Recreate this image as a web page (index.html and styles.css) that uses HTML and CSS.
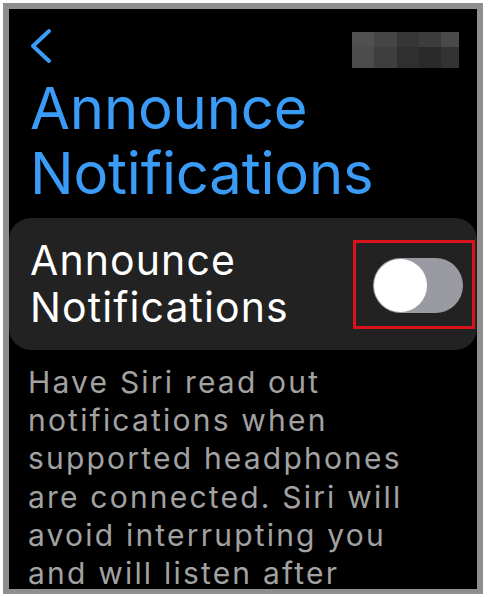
FILE: index.html
```html
<!DOCTYPE html>
<html>
<head>
<meta charset="utf-8">
<link rel="stylesheet" href="styles.css">
</head>
<body>
<div class="frame">
  <div class="header">
    <svg class="back" width="24" height="36" viewBox="0 0 24 36"><polyline points="20,3 4,18 20,33" fill="none" stroke="#3a9cf6" stroke-width="4" stroke-linecap="round" stroke-linejoin="round"/></svg>
    <div class="mask">
      <span class="m1"></span><span class="m2"></span><span class="m3"></span><span class="m4"></span><span class="m5"></span>
      <span class="m6"></span><span class="m7"></span><span class="m8"></span><span class="m9"></span><span class="m10"></span>
    </div>
  </div>
  <h1 class="title">Announce<br>Notifications</h1>
  <div class="card">
    <div class="card-label">Announce<br>Notifications</div>
    <div class="highlight">
      <div class="toggle"><div class="knob"></div></div>
    </div>
  </div>
  <p class="desc">Have Siri read out notifications when supported headphones are connected. Siri will avoid interrupting you and will listen after</p>
</div>
</body>
</html>
```

FILE: styles.css
```css
html, body {
  margin: 0;
  padding: 0;
  background: #ffffff;
}
.frame {
  margin: 3px 0 0 3px;
  width: 468px;
  height: 580px;
  border: 6px solid #8e8e8e;
  border-bottom-width: 5px;
  background: #000;
  overflow: hidden;
  font-family: Inter, "Noto Sans", sans-serif;
}
.header {
  height: 48px;
  padding: 19px 18px 0 21px;
  display: flex;
  justify-content: space-between;
  align-items: flex-start;
}
.back {
  display: block;
  margin-left: -1px;
}
.mask {
  margin-top: 4px;
  width: 107px;
  height: 36px;
  display: grid;
  grid-template-columns: 22px 23px 22px 22px 18px;
  grid-template-rows: 15px 21px;
}
.mask span { display: block; }
.m1 { background: #505050; }
.m2 { background: #454545; }
.m3 { background: #363636; }
.m4 { background: #3c3c3c; }
.m5 { background: #4a4a4a; }
.m6 { background: #4c4c4c; }
.m7 { background: #3e3e3e; }
.m8 { background: #2f2f2f; }
.m9 { background: #2a2a2a; }
.m10 { background: #333333; }
.title {
  margin: 0;
  padding-left: 21px;
  font-weight: 400;
  font-size: 58px;
  line-height: 65px;
  color: #3a9cf6;
  letter-spacing: -0.2px;
}
.card {
  margin-top: 12px;
  height: 132px;
  box-sizing: border-box;
  background: #222222;
  border-radius: 22px;
  display: flex;
  align-items: center;
  justify-content: space-between;
  padding: 0 2px 0 21px;
}
.card-label {
  color: #ffffff;
  font-size: 41px;
  line-height: 47px;
  letter-spacing: 1.1px;
}
.highlight {
  border: 3px solid #d8131b;
  padding: 15px 9px 13px 17px;
}
.toggle {
  width: 90px;
  height: 55px;
  border-radius: 28px;
  background: #9a9aa2;
  position: relative;
}
.knob {
  position: absolute;
  left: 1px;
  top: 1px;
  width: 53px;
  height: 53px;
  border-radius: 50%;
  background: #ffffff;
}
.desc {
  margin: 13px 0 0 0;
  width: 415px;
  padding-left: 19px;
  color: #a2a2a2;
  font-size: 30px;
  line-height: 38.2px;
  letter-spacing: 2.2px;
}
```
